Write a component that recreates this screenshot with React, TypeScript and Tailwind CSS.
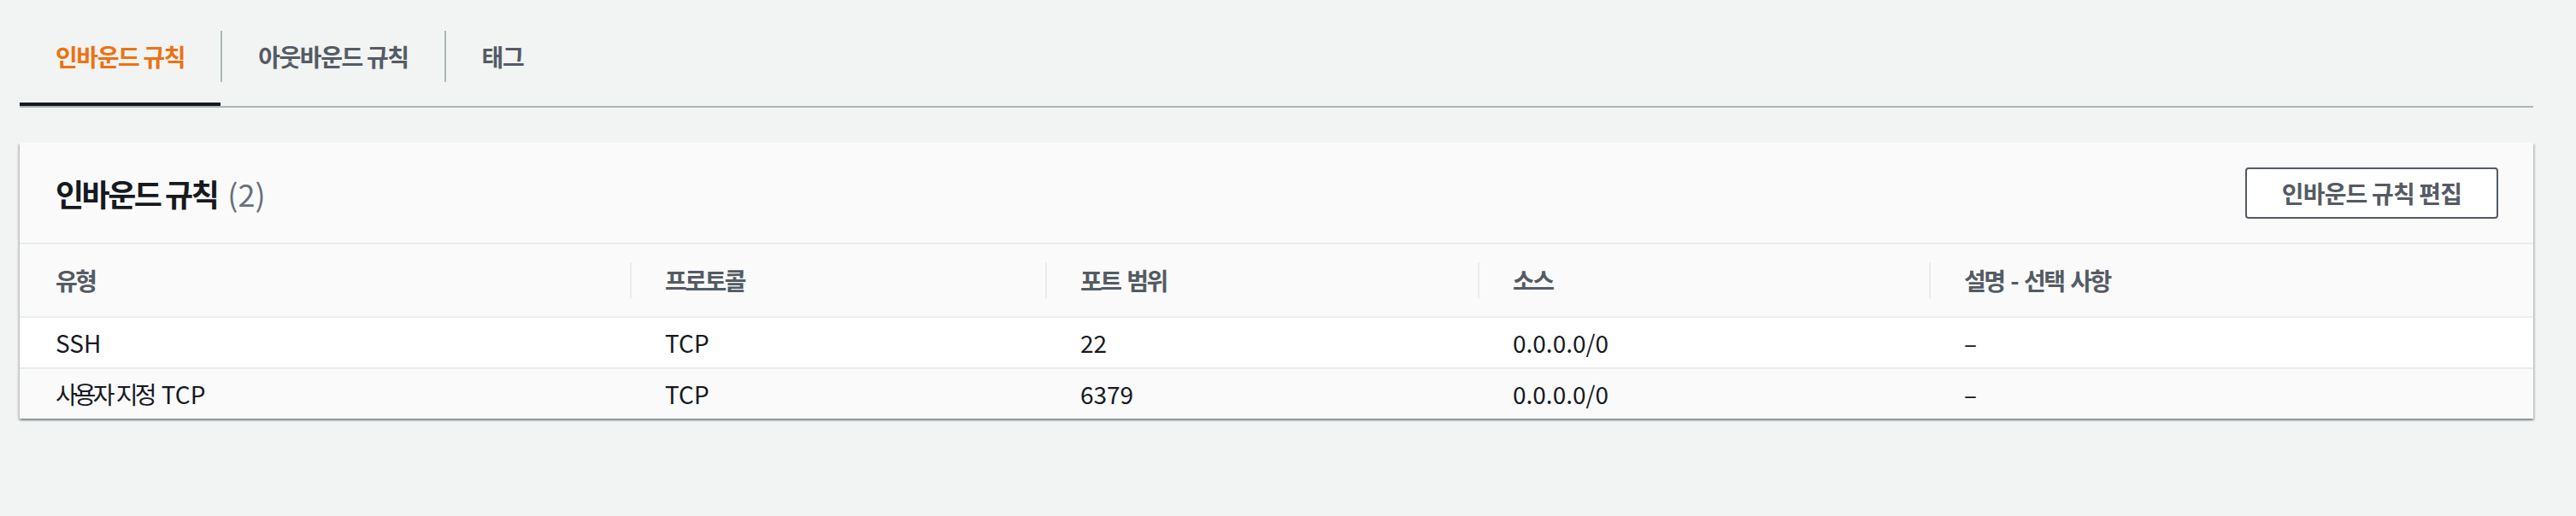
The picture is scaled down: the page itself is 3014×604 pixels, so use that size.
import React from 'react';

const rows = [
  { type: 'SSH', protocol: 'TCP', port: '22', source: '0.0.0.0/0', desc: '–' },
  { type: 'custom', protocol: 'TCP', port: '6379', source: '0.0.0.0/0', desc: '–' },
];

const columns = ['유형', '프로토콜', '포트 범위', '소스', '설명 - 선택 사항'];

const tabs = [
  { label: '인바운드 규칙', active: true },
  { label: '아웃바운드 규칙', active: false },
  { label: '태그', active: false },
];

const App = () => {
  return (
    <div className="min-h-screen w-full bg-[#f2f3f3] font-['Noto_Sans_CJK_KR',sans-serif] pl-[23px] pr-[50px] pt-[36px]">
      {/* Tabs */}
      <div className="flex border-b-2 border-[#aab7b8]">
        {tabs.map((tab, i) => (
          <div
            key={tab.label}
            className={`pb-[24px] border-b-4 ${tab.active ? 'border-[#16191f]' : 'border-transparent'}`}
          >
            <div
              className={`h-[60px] flex items-center px-[42px] text-[28px] font-bold tracking-[-0.05em] ${
                i > 0 ? 'border-l-2 border-[#aab7b8]' : ''
              } ${tab.active ? 'text-[#ec7211]' : 'text-[#545b64]'}`}
            >
              {tab.label}
            </div>
          </div>
        ))}
      </div>

      {/* Card */}
      <div className="mt-[41px] bg-white shadow-[0_2px_2px_0_rgba(0,28,36,0.3),2px_2px_2px_0_rgba(0,28,36,0.15),-2px_2px_2px_0_rgba(0,28,36,0.15)]">
        <div className="h-[119px] flex items-center justify-between pl-[42px] pr-[41px] bg-[#fafafa] border-b-2 border-[#eaeded]">
          <h2 className="text-[36px] leading-none">
            <span className="font-bold text-[#16191f] tracking-[-0.07em]">인바운드 규칙</span>
            <span className="ml-[12px] text-[#687078]">(2)</span>
          </h2>
          <button className="w-[296px] h-[60px] flex items-center justify-center bg-white border-2 border-[#545b64] rounded-[4px] text-[28px] font-bold text-[#545b64] tracking-[-0.03em]">
            인바운드 규칙 편집
          </button>
        </div>

        {/* Table */}
        <div className="grid grid-cols-[714px_486px_506px_528px_1fr]">
          {columns.map((col, i) => (
            <div key={col} className="h-[84px] flex items-center bg-[#fafafa]">
              {i > 0 && <div className="w-[2px] h-[42px] bg-[#eaeded] mr-[39px]" />}
              <span
                className={`text-[28px] font-bold text-[#545b64] tracking-[-0.09em] [word-spacing:4px] ${
                  i === 0 ? 'ml-[42px]' : ''
                }`}
              >
                {col}
              </span>
            </div>
          ))}

          {rows.map((row, r) => {
            const bg = r % 2 === 0 ? 'bg-white' : 'bg-[#fafafa]';
            const cell = `h-[60px] flex items-center border-t-2 border-[#eaeded] text-[28px] text-[#16191f] ${bg}`;
            return (
              <React.Fragment key={r}>
                <div className={`${cell} pl-[42px]`}>
                  {row.type === 'custom' ? (
                    <span className="[word-spacing:3px]">
                      <span className="tracking-[-0.14em]">사용자 지정</span> TCP
                    </span>
                  ) : (
                    row.type
                  )}
                </div>
                <div className={`${cell} pl-[41px]`}>{row.protocol}</div>
                <div className={`${cell} pl-[41px]`}>{row.port}</div>
                <div className={`${cell} pl-[41px]`}>{row.source}</div>
                <div className={`${cell} pl-[41px]`}>{row.desc}</div>
              </React.Fragment>
            );
          })}
        </div>
      </div>
    </div>
  );
};

export default App;
